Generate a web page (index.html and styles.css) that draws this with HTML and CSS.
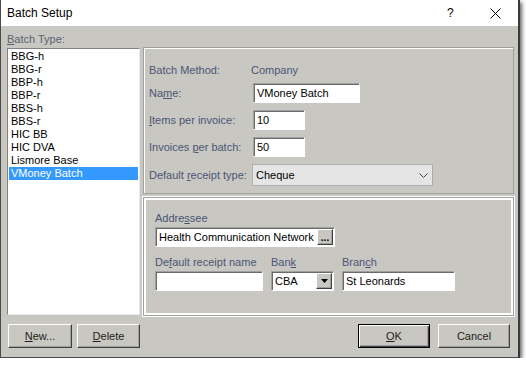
FILE: index.html
```html
<!DOCTYPE html>
<html lang="en">
<head>
  <meta charset="UTF-8" />
  <title>Batch Setup</title>
  <link rel="stylesheet" href="styles.css">
</head>
<body>
  <div class="window">
    <div class="titlebar">
      <div class="title">Batch Setup</div>
      <div class="help">?</div>
      <div class="close">
        <svg width="11" height="11" viewBox="0 0 11 11">
          <path d="M0.5 0.5 L10.5 10.5 M10.5 0.5 L0.5 10.5" stroke="#000" stroke-width="1" fill="none"/>
        </svg>
      </div>
    </div>

    <div class="content">
      <div class="main">
        <div class="left">
          <div class="label"><u>B</u>atch Type:</div>
          <div class="listbox">
            <div class="item">BBG-h</div>
            <div class="item">BBG-r</div>
            <div class="item">BBP-h</div>
            <div class="item">BBP-r</div>
            <div class="item">BBS-h</div>
            <div class="item">BBS-r</div>
            <div class="item">HIC BB</div>
            <div class="item">HIC DVA</div>
            <div class="item">Lismore Base</div>
            <div class="item selected">VMoney Batch</div>
          </div>
        </div>

        <div class="right">
          <div class="panel upper">
            <div class="row first">
              <div class="label">Batch Method:</div>
              <div class="value">Company</div>
            </div>
            <div class="row second">
              <div class="label">Na<u>m</u>e:</div>
              <div class="field name">VMoney Batch</div>
            </div>
            <div class="row">
              <div class="label"><u>I</u>tems per invoice:</div>
              <div class="field small">10</div>
            </div>
            <div class="row">
              <div class="label">Invoices <u>p</u>er batch:</div>
              <div class="field small">50</div>
            </div>
            <div class="row">
              <div class="label">Default <u>r</u>eceipt type:</div>
              <div class="select">
                <span>Cheque</span>
                <svg width="9" height="5" viewBox="0 0 9 5">
                  <path d="M0.5 0.5 L4.5 4.5 L8.5 0.5" stroke="#444" stroke-width="1" fill="none"/>
                </svg>
              </div>
            </div>
          </div>

          <div class="panel lower">
            <div class="label">Addre<u>s</u>see</div>
            <div class="field addressee">
              <span>Health Communication Network</span>
              <div class="minibtn dots">...</div>
            </div>
            <div class="cols">
              <div class="col receipt">
                <div class="label">De<u>f</u>ault receipt name</div>
                <div class="field"></div>
              </div>
              <div class="col bank">
                <div class="label">Ban<u>k</u></div>
                <div class="field combo">
                  <span>CBA</span>
                  <div class="minibtn">
                    <svg width="7" height="4" viewBox="0 0 7 4"><path d="M0 0 H7 L3.5 4 Z" fill="#000"/></svg>
                  </div>
                </div>
              </div>
              <div class="col branch">
                <div class="label">Bran<u>c</u>h</div>
                <div class="field">St Leonards</div>
              </div>
            </div>
          </div>
        </div>
      </div>

      <div class="footer">
        <div class="btn new"><u>N</u>ew...</div>
        <div class="btn delete"><u>D</u>elete</div>
        <div class="spacer"></div>
        <div class="btn default"><u>O</u>K</div>
        <div class="btn cancel">Cancel</div>
      </div>
    </div>
  </div>
</body>
</html>
```

FILE: styles.css
```css
* {
  box-sizing: border-box;
}

body {
  margin: 0;
  padding: 0;
  background: #ffffff;
  font-family: 'Liberation Sans', Arial, sans-serif;
  font-size: 11px;
}

u {
  text-decoration: underline;
  text-underline-offset: 1px;
}

.window {
  width: 520px;
  height: 358px;
  border: 1px solid #4a4a4a;
  border-top: none;
  border-right: 2px solid #3a3a3a;
  box-shadow: 2px 2px 4px rgba(0, 0, 0, 0.6);
  background: #c8c7c1;
  display: flex;
  flex-direction: column;
}

.titlebar {
  height: 26px;
  background: #ffffff;
  display: flex;
  align-items: center;
  padding-left: 6px;
}

.title {
  font-size: 12px;
  color: #000;
  flex: 1;
}

.help {
  font-size: 12px;
  width: 43px;
  color: #000;
}

.close {
  width: 28px;
  display: flex;
  align-items: center;
  height: 11px;
}

.content {
  flex: 1;
  padding: 6px 4px 0 6px;
  color: #4b5676;
}

.main {
  display: flex;
  gap: 3px;
}

.left {
  width: 133px;
  display: flex;
  flex-direction: column;
}

.label {
  height: 15px;
  line-height: 15px;
  white-space: nowrap;
}

.left .label {
  color: #5b6272;
}

.listbox {
  margin-top: 1px;
  height: 267px;
  background: #fff;
  border: 1px solid;
  border-color: #828282 #e8e8e8 #e8e8e8 #828282;
  padding: 1px 0 0 1px;
  color: #000;
}

.item {
  height: 13px;
  line-height: 13px;
  padding-left: 2px;
  width: 129px;
}

.item.selected {
  background: #3399ff;
  color: #fff;
}

.right {
  flex: 1;
  padding-top: 15px;
}

.panel {
  border: 1px solid #a0a0a0;
  box-shadow: inset 1px 1px #ffffff;
}

.upper {
  height: 147px;
  padding: 12px 0 0 5px;
}

.row {
  display: grid;
  grid-template-columns: 104px auto;
  align-items: center;
  margin-top: 7px;
}

.row.first {
  margin-top: 0;
  height: 20px;
}

.row.second {
  margin-top: 3px;
}

.value {
  margin-left: -2px;
}

.field {
  height: 20px;
  background: #fff;
  border: 1px solid;
  border-color: #a0a0a0 #fff #fff #a0a0a0;
  box-shadow: inset 1px 1px #6a6a6a;
  padding: 0 0 0 3px;
  line-height: 18px;
  color: #000;
  display: flex;
  align-items: center;
  white-space: nowrap;
}

.field.name {
  width: 107px;
}

.field.small {
  width: 52px;
}

.select {
  width: 181px;
  height: 22px;
  margin-left: -1px;
  background: #e5e5e5;
  border: 1px solid #adadad;
  display: flex;
  align-items: center;
  justify-content: space-between;
  padding: 0 4px 0 3px;
  color: #000;
}

.lower {
  margin-top: 3px;
  height: 119px;
  padding: 13px 0 0 11px;
  box-shadow: 0 0 0 1px #fff, inset 2px 2px #fff, inset -2px -2px #fff;
}

.lower .field {
  margin-top: 1px;
}

.field.addressee {
  width: 180px;
  justify-content: space-between;
  padding-right: 1px;
}

.minibtn {
  width: 16px;
  height: 16px;
  background: #c8c7c1;
  border: 1px solid;
  border-color: #fff #404040 #404040 #fff;
  box-shadow: inset -1px -1px #a0a0a0;
  display: flex;
  align-items: center;
  justify-content: center;
  flex: none;
}

.minibtn.dots {
  font-weight: bold;
  font-size: 10px;
  line-height: 10px;
  padding-top: 2px;
}

.cols {
  display: flex;
  gap: 8px;
  margin-top: 8px;
}

.receipt {
  width: 108px;
}

.bank {
  width: 63px;
}

.branch {
  width: 113px;
}

.field.combo {
  justify-content: space-between;
  padding-right: 1px;
}

.footer {
  display: flex;
  gap: 5px;
  margin-top: 8px;
  padding-left: 1px;
  padding-right: 4px;
}

.spacer {
  flex: 1;
}

.btn {
  height: 24px;
  line-height: 22px;
  text-align: center;
  color: #1e1e1e;
  background: #c8c7c1;
  border: 1px solid;
  border-color: #fff #404040 #404040 #fff;
  box-shadow: inset -1px -1px #a0a0a0;
}

.btn.new {
  width: 64px;
}

.btn.delete {
  width: 63px;
}

.btn.default {
  width: 72px;
  border-color: #000;
  box-shadow: inset 1px 1px #fff, inset -1px -1px #404040, inset -2px -2px #a0a0a0;
}

.btn.cancel {
  width: 72px;
  margin-left: 3px;
}
```
